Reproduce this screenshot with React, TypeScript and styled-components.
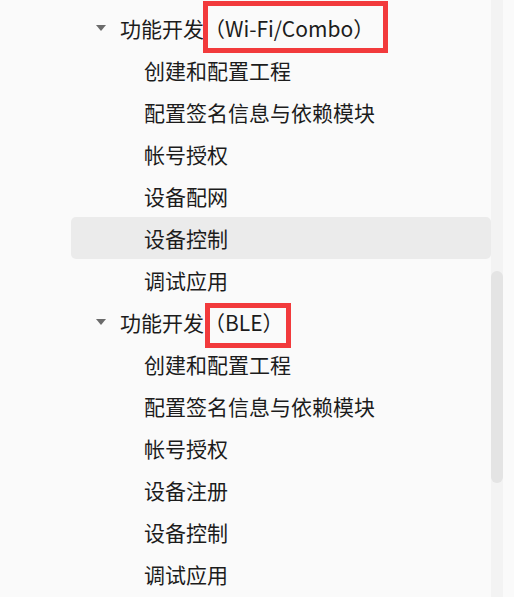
import React from "react";
import styled, { createGlobalStyle } from "styled-components";

interface Box {
  left: number;
  right: number;
  top: number;
  bottom: number;
}

interface Section {
  title: string;
  tag: string;
  box: Box;
  items: string[];
}

const sections: Section[] = [
  {
    title: "功能开发",
    tag: "（Wi-Fi/Combo）",
    box: { left: -1, right: -14, top: -17, bottom: -14 },
    items: ["创建和配置工程", "配置签名信息与依赖模块", "帐号授权", "设备配网", "设备控制", "调试应用"],
  },
  {
    title: "功能开发",
    tag: "（BLE）",
    box: { left: 1, right: -7, top: -9, bottom: -15 },
    items: ["创建和配置工程", "配置签名信息与依赖模块", "帐号授权", "设备注册", "设备控制", "调试应用"],
  },
];

const GlobalStyle = createGlobalStyle`
  html, body {
    margin: 0;
    padding: 0;
    background: #fafafa;
    overflow: hidden;
  }
  body {
    font-family: "Noto Sans CJK SC", "Noto Sans", sans-serif;
    color: #1c1c1c;
  }
`;

export default function App() {
  return (
    <>
      <GlobalStyle />
      <Page>
        <Tree>
          {sections.map((s, i) => (
            <React.Fragment key={i}>
              <Row level={0}>
                <Caret viewBox="0 0 10 6">
                  <path d="M0 0 L10 0 L5 6 Z" fill="#6b6b6b" />
                </Caret>
                {s.title}
                <Marked box={s.box}>{s.tag}</Marked>
              </Row>
              {s.items.map((it, j) => (
                <Row key={j} level={1} active={i === 0 && j === 4}>
                  {it}
                </Row>
              ))}
            </React.Fragment>
          ))}
        </Tree>
        <Track>
          <Thumb />
        </Track>
      </Page>
    </>
  );
}

const Page = styled.div`
  display: flex;
  height: 597px;
  width: 514px;
  padding-top: 7px;
  box-sizing: border-box;
`;

const Tree = styled.div`
  margin-left: 71px;
  width: 420px;
  display: flex;
  flex-direction: column;
`;

const Row = styled.div<{ level: number; active?: boolean }>`
  height: 42px;
  flex: none;
  display: flex;
  align-items: center;
  padding-left: ${(p) => (p.level === 0 ? 25 : 73)}px;
  font-size: 21px;
  line-height: 1;
  border-radius: 5px;
  background: ${(p) => (p.active ? "#ebebeb" : "transparent")};
  white-space: nowrap;
`;

const Caret = styled.svg`
  width: 10px;
  height: 6px;
  margin-right: 14px;
  flex: none;
`;

const Marked = styled.span<{ box: Box }>`
  position: relative;
  &::after {
    content: "";
    position: absolute;
    left: ${(p) => p.box.left}px;
    right: ${(p) => p.box.right}px;
    top: ${(p) => p.box.top}px;
    bottom: ${(p) => p.box.bottom}px;
    border: 5px solid #f23a3c;
  }
`;

const Track = styled.div`
  width: 12px;
  margin-top: -7px;
  background: #f3f3f3;
  display: flex;
  flex-direction: column;
`;

const Thumb = styled.div`
  margin-top: 271px;
  height: 212px;
  border-radius: 6px;
  background: #e4e4e4;
`;
